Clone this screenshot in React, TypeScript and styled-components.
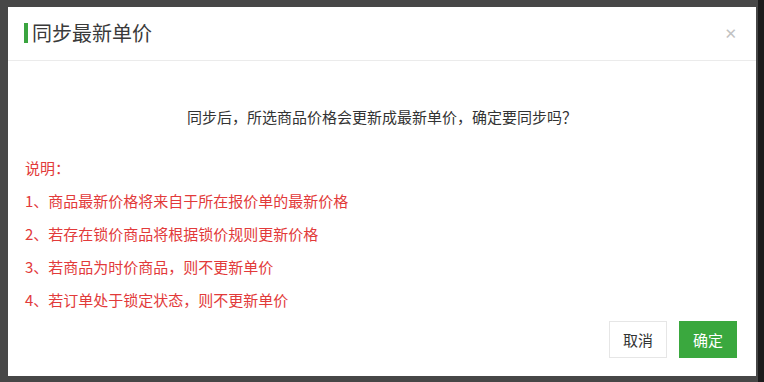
import React from 'react'
import styled, { createGlobalStyle } from 'styled-components'

const GlobalStyle = createGlobalStyle`
  html, body {
    margin: 0;
    padding: 0;
    height: 100%;
  }
  body {
    background: linear-gradient(to right, #474747 758px, #1c1c1c 758px);
    font-family: "Microsoft YaHei", "Noto Sans CJK SC", "Noto Sans", sans-serif;
  }
`

const Backdrop = styled.div`
  width: 764px;
  height: 382px;
  padding: 7px 0 0 8px;
  box-sizing: border-box;
`

const Dialog = styled.div`
  width: 748px;
  height: 369px;
  background: #fff;
  display: flex;
  flex-direction: column;
  box-sizing: border-box;
`

const Header = styled.div`
  height: 54px;
  border-bottom: 1px solid #ebebeb;
  display: flex;
  align-items: center;
  padding: 0 16px 2px;
  box-sizing: border-box;
`

const TitleBar = styled.span`
  width: 4px;
  height: 20px;
  background: #3aa43f;
  margin-right: 4px;
`

const Title = styled.h3`
  flex: 1;
  margin: 0;
  font-size: 20px;
  font-weight: 400;
  color: #3a3a3a;
  line-height: 24px;
`

const Close = styled.span`
  color: #c2c2c2;
  font-size: 15px;
  font-family: "DejaVu Sans", sans-serif;
  margin: 2px 3px 0 0;
  cursor: pointer;
`

const Body = styled.div`
  flex: 1;
  padding: 46px 17px 0;
`

const Message = styled.p`
  margin: 0 0 24px;
  text-align: center;
  font-size: 15px;
  line-height: 20px;
  color: #333;
`

const Note = styled.div`
  color: #e23a3a;
  font-size: 15px;
  line-height: 33px;
`

const Footer = styled.div`
  display: flex;
  justify-content: flex-end;
  gap: 12px;
  padding: 0 19px 18px;
`

const Button = styled.button<{ $primary?: boolean }>`
  width: 58px;
  height: 37px;
  font-family: inherit;
  font-size: 15px;
  border: 1px solid ${p => (p.$primary ? '#3aa83e' : '#e6e6e6')};
  background: ${p => (p.$primary ? '#3aa83e' : '#fff')};
  color: ${p => (p.$primary ? '#fff' : '#333')};
  padding: 0;
  cursor: pointer;
`

const notes = [
  '说明：',
  '1、商品最新价格将来自于所在报价单的最新价格',
  '2、若存在锁价商品将根据锁价规则更新价格',
  '3、若商品为时价商品，则不更新单价',
  '4、若订单处于锁定状态，则不更新单价',
]

export default function App() {
  return (
    <>
      <GlobalStyle />
      <Backdrop>
        <Dialog>
          <Header>
            <TitleBar />
            <Title>同步最新单价</Title>
            <Close>✕</Close>
          </Header>
          <Body>
            <Message>同步后，所选商品价格会更新成最新单价，确定要同步吗？</Message>
            {notes.map(n => (
              <Note key={n}>{n}</Note>
            ))}
          </Body>
          <Footer>
            <Button>取消</Button>
            <Button $primary>确定</Button>
          </Footer>
        </Dialog>
      </Backdrop>
    </>
  )
}
